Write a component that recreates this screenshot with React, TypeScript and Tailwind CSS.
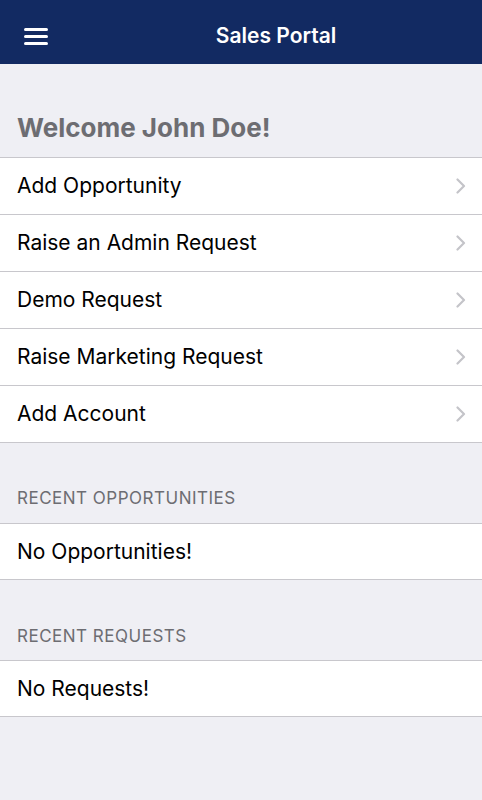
const actions = ['Add Opportunity', 'Raise an Admin Request', 'Demo Request', 'Raise Marketing Request', 'Add Account'];

function Chevron() {
  return (
    <svg width="10" height="16" viewBox="0 0 10 16" fill="none" className="shrink-0">
      <path d="M1.5 1.5L8 8l-6.5 6.5" stroke="#c4c4c9" strokeWidth="2.2" strokeLinecap="round" strokeLinejoin="round" />
    </svg>
  );
}

function SectionTitle({ title, className }: { title: string; className: string }) {
  return (
    <div className={`px-[17px] text-[17px] leading-[20px] tracking-[0.5px] text-[#6d6d72] ${className}`}>{title}</div>
  );
}

export default function App() {
  return (
    <div className="min-h-[800px] bg-[#efeff4] font-['Inter',sans-serif]">
      <header className="relative flex h-[64px] items-center justify-center bg-[#122a62]">
        <button className="absolute left-[24px] top-[28px] flex w-[24px] flex-col gap-[4px]">
          <span className="block h-[3px] w-full rounded-full bg-white" />
          <span className="block h-[3px] w-full rounded-full bg-white" />
          <span className="block h-[3px] w-full rounded-full bg-white" />
        </button>
        <h1 className="pl-[70px] pt-[8px] text-[21px] font-semibold text-white">Sales Portal</h1>
      </header>

      <div className="px-[17px] pb-[14px] pt-[49px] text-[26px] font-bold leading-[30px] text-[#6d6d72]">
        Welcome John Doe!
      </div>

      <ul className="border-t border-[#c8c7cc] bg-white">
        {actions.map((a) => (
          <li key={a} className="flex h-[57px] items-center justify-between border-b border-[#c8c7cc] pl-[17px] pr-[16px]">
            <span className="text-[21px] text-black">{a}</span>
            <Chevron />
          </li>
        ))}
      </ul>

      <SectionTitle title="RECENT OPPORTUNITIES" className="pb-[15px] pt-[45px]" />
      <div className="flex h-[57px] items-center border-y border-[#c8c7cc] bg-white px-[17px] text-[21px] text-black">
        No Opportunities!
      </div>

      <SectionTitle title="RECENT REQUESTS" className="pb-[14px] pt-[46px]" />
      <div className="flex h-[57px] items-center border-y border-[#c8c7cc] bg-white px-[17px] text-[21px] text-black">
        No Requests!
      </div>
    </div>
  );
}
